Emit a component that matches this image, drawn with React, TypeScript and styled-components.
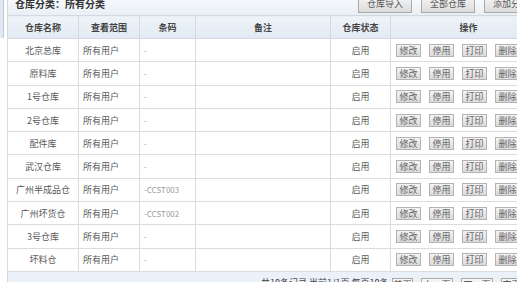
import styled, { createGlobalStyle } from "styled-components";

const GlobalStyle = createGlobalStyle`
  html, body {
    margin: 0;
    padding: 0;
    background: #ffffff;
    overflow: hidden;
  }
  body {
    font-family: "Noto Sans CJK SC", "Liberation Sans", sans-serif;
    font-size: 9px;
    color: #555;
  }
`;

const Page = styled.div`
  width: 517px;
  height: 282px;
  display: flex;
  overflow: hidden;
`;

const SideEdge = styled.div`
  width: 7px;
  flex-shrink: 0;
  display: flex;
  flex-direction: column;
`;

const SideTab = styled.div`
  width: 3px;
  height: 38px;
  background: #dfe8f2;
  border-right: 1px solid #b9c8d8;
`;

const Main = styled.div`
  width: 540px;
  flex-shrink: 0;
  display: flex;
  flex-direction: column;
`;

const TopBar = styled.div`
  height: 15px;
  flex-shrink: 0;
  display: flex;
  align-items: flex-end;
  background: linear-gradient(#f6f9fc, #e9eff6);
  overflow: hidden;
  border-left: 1px solid #d3dbe4;
`;

const Title = styled.div`
  flex: 1;
  padding: 0 0 6px 7px;
  font-size: 10px;
  font-weight: bold;
  color: #333;
  line-height: 10px;
`;

const TopButtons = styled.div`
  display: flex;
  gap: 9px;
  padding-bottom: 2px;
  margin-right: 9px;
`;

const TopButton = styled.div`
  width: 54px;
  height: 18px;
  box-sizing: border-box;
  border: 1px solid #a9a9a9;
  background: linear-gradient(#f7f7f7, #dcdcdc);
  color: #555;
  font-size: 9px;
  display: flex;
  align-items: flex-end;
  justify-content: center;
  padding-bottom: 3px;
  line-height: 10px;
`;

const Table = styled.table`
  border-collapse: collapse;
  table-layout: fixed;
  width: 533px;
  flex-shrink: 0;
`;

const Th = styled.th<{ w: number }>`
  width: ${({ w }) => w}px;
  height: 22px;
  padding: 0;
  border: 1px solid #d4d9e0;
  background: linear-gradient(#eef3f8, #e2eaf3);
  font-size: 9px;
  font-weight: bold;
  color: #444;
  text-align: center;
`;

const Td = styled.td<{ align?: string; light?: boolean; flush?: boolean }>`
  height: 22.3px;
  padding: 0 0 0 ${({ align, flush }) => (align === "left" && !flush ? "4px" : "0")};
  border: 1px solid #d9dde2;
  text-align: ${({ align }) => align || "center"};
  color: ${({ light }) => (light ? "#9a9a9a" : "#5a5a5a")};
  font-size: ${({ light }) => (light ? "8px" : "9px")};
  white-space: nowrap;
  overflow: hidden;
`;

const Actions = styled.div`
  display: flex;
  gap: 8px;
  padding-left: 5px;
`;

const ActButton = styled.div`
  width: 25px;
  height: 13px;
  box-sizing: border-box;
  border: 1px solid #b3b3b3;
  background: linear-gradient(#f4f4f4, #dadada);
  color: #666;
  font-size: 9px;
  line-height: 11px;
  text-align: center;
  flex-shrink: 0;
`;

const Pager = styled.div`
  height: 14px;
  flex-shrink: 0;
  display: flex;
  align-items: flex-start;
  background: #eaf1f9;
  border-left: 1px solid #d4d9e0;
  padding-top: 6px;
`;

const PagerInfo = styled.div`
  margin-left: 253px;
  width: 131px;
  font-size: 9px;
  line-height: 10px;
  color: #444;
`;

const PagerButtons = styled.div`
  display: flex;
  gap: 8px;
`;

const PagerButton = styled.div<{ w: number }>`
  width: ${({ w }) => w}px;
  height: 14px;
  box-sizing: border-box;
  border: 1px solid #a9a9a9;
  background: linear-gradient(#f8f8f8, #e0e0e0);
  font-size: 9px;
  line-height: 12px;
  text-align: center;
  color: #444;
`;

const columns = [
  { label: "仓库名称", w: 70 },
  { label: "查看范围", w: 60 },
  { label: "条码", w: 55 },
  { label: "备注", w: 134 },
  { label: "仓库状态", w: 59 },
  { label: "操作", w: 155 },
];

const warehouses = [
  { name: "北京总库", code: "-" },
  { name: "原料库", code: "-" },
  { name: "1号仓库", code: "-" },
  { name: "2号仓库", code: "-" },
  { name: "配件库", code: "-" },
  { name: "武汉仓库", code: "-" },
  { name: "广州半成品仓", code: "-CCST003" },
  { name: "广州坏货仓", code: "-CCST002" },
  { name: "3号仓库", code: "-" },
  { name: "坏料仓", code: "-" },
];

export default function App() {
  return (
    <>
      <GlobalStyle />
      <Page>
        <SideEdge>
          <SideTab />
        </SideEdge>
        <Main>
          <TopBar>
            <Title>仓库分类：所有分类</Title>
            <TopButtons>
              <TopButton>仓库导入</TopButton>
              <TopButton>全部仓库</TopButton>
              <TopButton>添加分类</TopButton>
            </TopButtons>
          </TopBar>
          <Table>
            <thead>
              <tr>
                {columns.map((c) => (
                  <Th key={c.label} w={c.w}>
                    {c.label}
                  </Th>
                ))}
              </tr>
            </thead>
            <tbody>
              {warehouses.map((w) => (
                <tr key={w.name}>
                  <Td>{w.name}</Td>
                  <Td align="left">所有用户</Td>
                  <Td align="left" light>
                    {w.code}
                  </Td>
                  <Td />
                  <Td>启用</Td>
                  <Td align="left" flush>
                    <Actions>
                      <ActButton>修改</ActButton>
                      <ActButton>停用</ActButton>
                      <ActButton>打印</ActButton>
                      <ActButton>删除</ActButton>
                    </Actions>
                  </Td>
                </tr>
              ))}
            </tbody>
          </Table>
          <Pager>
            <PagerInfo>共10条记录 当前1/1页 每页10条</PagerInfo>
            <PagerButtons>
              <PagerButton w={21}>首页</PagerButton>
              <PagerButton w={32}>上一页</PagerButton>
              <PagerButton w={32}>下一页</PagerButton>
              <PagerButton w={21}>末页</PagerButton>
            </PagerButtons>
          </Pager>
        </Main>
      </Page>
    </>
  );
}
